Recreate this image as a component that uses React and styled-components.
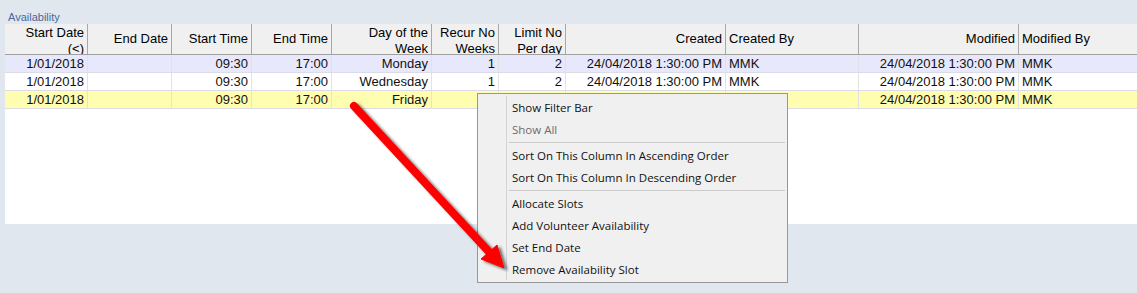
import React from "react";
import styled, { createGlobalStyle } from "styled-components";

const Global = createGlobalStyle`
  html, body { margin: 0; padding: 0; background: #e0e7ef; }
  body { width: 1137px; height: 293px; overflow: hidden; font-family: "Liberation Sans", Arial, sans-serif; }
  #root { position: relative; width: 1137px; height: 293px; }
`;

const Page = styled.div`
  position: relative;
  width: 1137px;
  height: 293px;
  display: flex;
  flex-direction: column;
`;

const Caption = styled.div`
  height: 24px;
  box-sizing: border-box;
  padding: 11px 0 0 8px;
  font-size: 11px;
  line-height: 13px;
  color: #4a6899;
`;

const GridPanel = styled.div`
  margin-left: 5px;
  height: 200px;
  background: #ffffff;
  overflow: hidden;
`;

const cols = "83px 84px 80px 80px 100px 67px 67px 160px 133px 160px 1fr";

const HeaderRow = styled.div`
  display: grid;
  grid-template-columns: ${cols};
  height: 31px;
  box-sizing: border-box;
  border-bottom: 1px solid #a0a0a0;
  background: #f0f0f0;
`;

const HeaderCell = styled.div`
  display: flex;
  align-items: ${(p) => (p.$twoLine ? "flex-start" : "center")};
  justify-content: ${(p) => (p.$left ? "flex-start" : "flex-end")};
  text-align: ${(p) => (p.$left ? "left" : "right")};
  padding: ${(p) => (p.$twoLine ? "1px" : "0")} 3px 0;
  border-right: 1px solid #a8a8a8;
  overflow: hidden;
  font-size: 13px;
  line-height: 16px;
  color: #000;
  &:last-child { border-right: none; }
`;

const HeaderText = styled.span`
  min-width: 0;
`;

const rowBg = { lavender: "#e8e8fc", white: "#ffffff", yellow: "#fffdb0" };

const DataRow = styled.div`
  display: grid;
  grid-template-columns: ${cols};
  height: 18px;
  box-sizing: border-box;
  border-bottom: 1px solid #dcdce6;
  background: ${(p) => rowBg[p.$tone]};
`;

const DataCell = styled.div`
  text-align: ${(p) => (p.$left ? "left" : "right")};
  padding: 0 3px;
  border-right: 1px solid #e2e2e2;
  font-size: 13px;
  line-height: 17px;
  color: #111;
  white-space: nowrap;
  overflow: hidden;
  &:last-child { border-right: none; }
`;

const Menu = styled.div`
  position: absolute;
  left: 477px;
  top: 93px;
  width: 311px;
  height: 190px;
  box-sizing: border-box;
  border: 1px solid #979797;
  background: #f0f0f0;
  padding: 2px 2px;
  display: flex;
  flex-direction: column;
  font-family: "Open Sans", "Noto Sans", sans-serif;
  font-size: 11.5px;
  &::before {
    content: "";
    position: absolute;
    left: 28px;
    top: 2px;
    bottom: 2px;
    width: 1px;
    background: #d4d4d4;
  }
`;

const MenuItem = styled.div`
  height: 22px;
  display: flex;
  align-items: center;
  padding-left: 32px;
  color: ${(p) => (p.$disabled ? "#6d6d6d" : "#111")};
  white-space: nowrap;
`;

const MenuSep = styled.div`
  height: 4px;
  display: flex;
  align-items: center;
  padding-left: 29px;
  &::after {
    content: "";
    flex: 1;
    height: 1px;
    background: #cbcbcb;
  }
`;

const ArrowSvg = styled.svg`
  position: absolute;
  left: 0;
  top: 0;
  width: 1137px;
  height: 293px;
  pointer-events: none;
  overflow: visible;
`;

const headers = [
  { t: "Start Date (<)", two: true },
  { t: "End Date" },
  { t: "Start Time" },
  { t: "End Time" },
  { t: "Day of the Week", two: true },
  { t: "Recur No Weeks", two: true },
  { t: "Limit No Per day", two: true },
  { t: "Created" },
  { t: "Created By", left: true },
  { t: "Modified" },
  { t: "Modified By", left: true },
];

const leftCols = [8, 10];

const rows = [
  { tone: "lavender", c: ["1/01/2018", "", "09:30", "17:00", "Monday", "1", "2", "24/04/2018 1:30:00 PM", "MMK", "24/04/2018 1:30:00 PM", "MMK"] },
  { tone: "white", c: ["1/01/2018", "", "09:30", "17:00", "Wednesday", "1", "2", "24/04/2018 1:30:00 PM", "MMK", "24/04/2018 1:30:00 PM", "MMK"] },
  { tone: "yellow", c: ["1/01/2018", "", "09:30", "17:00", "Friday", "", "", "", "", "24/04/2018 1:30:00 PM", "MMK"] },
];

const menu = [
  { t: "Show Filter Bar" },
  { t: "Show All", disabled: true },
  { sep: true },
  { t: "Sort On This Column In Ascending Order" },
  { t: "Sort On This Column In Descending Order" },
  { sep: true },
  { t: "Allocate Slots" },
  { t: "Add Volunteer Availability" },
  { t: "Set End Date" },
  { t: "Remove Availability Slot" },
];

export default function App() {
  return (
    <Page>
      <Global />
      <Caption>Availability</Caption>
      <GridPanel>
        <HeaderRow>
          {headers.map((h, i) => (
            <HeaderCell key={i} $left={h.left} $twoLine={h.two}>
              <HeaderText>{h.t}</HeaderText>
            </HeaderCell>
          ))}
        </HeaderRow>
        {rows.map((r, i) => (
          <DataRow key={i} $tone={r.tone}>
            {r.c.map((v, j) => (
              <DataCell key={j} $left={leftCols.includes(j)}>{v}</DataCell>
            ))}
          </DataRow>
        ))}
      </GridPanel>
      <Menu>
        {menu.map((m, i) =>
          m.sep ? <MenuSep key={i} /> : <MenuItem key={i} $disabled={m.disabled}>{m.t}</MenuItem>
        )}
      </Menu>
      <ArrowSvg viewBox="0 0 1137 293">
        <defs>
          <filter id="sh" x="-20%" y="-20%" width="140%" height="140%">
            <feGaussianBlur in="SourceAlpha" stdDeviation="1.8" />
            <feOffset dx="3" dy="2" result="b" />
            <feComponentTransfer><feFuncA type="linear" slope="0.55" /></feComponentTransfer>
            <feMerge>
              <feMergeNode />
              <feMergeNode in="SourceGraphic" />
            </feMerge>
          </filter>
        </defs>
        <g filter="url(#sh)" fill="#ff0000" stroke="#ff0000">
          <line x1="354" y1="106" x2="491" y2="254" strokeWidth="8" strokeLinecap="round" />
          <polygon points="504,268 497,245 481,259" strokeWidth="1" strokeLinejoin="round" />
        </g>
      </ArrowSvg>
    </Page>
  );
}
